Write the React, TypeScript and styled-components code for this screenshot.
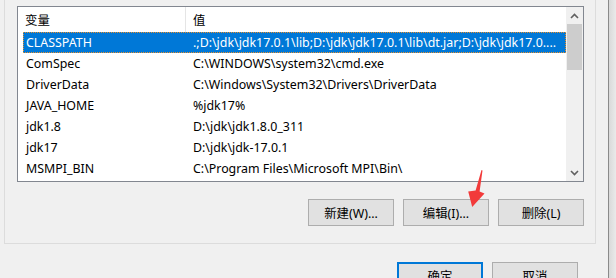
import React from 'react';
import styled, { createGlobalStyle } from 'styled-components';

const GlobalStyle = createGlobalStyle`
  html, body {
    margin: 0;
    padding: 0;
    background: #f0f0f0;
  }
  body {
    font-family: 'Noto Sans', 'Noto Sans CJK SC', sans-serif;
    font-size: 12.4px;
    color: #000;
  }
`;

interface EnvVar {
  name: string;
  value: string;
}

const vars: EnvVar[] = [
  {
    name: 'CLASSPATH',
    value: '.;D:\\jdk\\jdk17.0.1\\lib;D:\\jdk\\jdk17.0.1\\lib\\dt.jar;D:\\jdk\\jdk17.0....',
  },
  { name: 'ComSpec', value: 'C:\\WINDOWS\\system32\\cmd.exe' },
  { name: 'DriverData', value: 'C:\\Windows\\System32\\Drivers\\DriverData' },
  { name: 'JAVA_HOME', value: '%jdk17%' },
  { name: 'jdk1.8', value: 'D:\\jdk\\jdk1.8.0_311' },
  { name: 'jdk17', value: 'D:\\jdk\\jdk-17.0.1' },
  { name: 'MSMPI_BIN', value: 'C:\\Program Files\\Microsoft MPI\\Bin\\' },
];

const App = () => {
  return (
    <>
      <GlobalStyle />
      <Screen>
        <Window>
          <GroupPanel>
            <ListView>
              <ListBody>
                <Header>
                  <HeaderCell width={168}>变量</HeaderCell>
                  <HeaderCell>值</HeaderCell>
                </Header>
                {vars.map((v, i) => (
                  <Row key={v.name} selected={i === 0}>
                    <NameCell>{v.name}</NameCell>
                    <ValueCell>{v.value}</ValueCell>
                  </Row>
                ))}
              </ListBody>
              <ScrollBar>
                <ScrollArrow>
                  <svg width="9" height="6" viewBox="0 0 9 6">
                    <path d="M1 5 L4.5 1.5 L8 5" fill="none" stroke="#606060" strokeWidth="1.6" />
                  </svg>
                </ScrollArrow>
                <Track>
                  <Thumb />
                </Track>
                <ScrollArrow>
                  <svg width="9" height="6" viewBox="0 0 9 6">
                    <path d="M1 1 L4.5 4.5 L8 1" fill="none" stroke="#606060" strokeWidth="1.6" />
                  </svg>
                </ScrollArrow>
              </ScrollBar>
            </ListView>
            <ButtonRow>
              <Button>新建(W)...</Button>
              <Button>编辑(I)...</Button>
              <Button>删除(L)</Button>
            </ButtonRow>
          </GroupPanel>
          <DialogButtons>
            <Button primary>确定</Button>
            <Button>取消</Button>
          </DialogButtons>
        </Window>
        <Shadow />
        <Arrow width="20" height="40" viewBox="0 0 20 40">
          <polygon
            points="13.5,0 14.5,0.5 11.6,21.5 16.5,23.5 4.2,37 0.2,21.5 7.6,20.5"
            fill="#f23a3a"
          />
        </Arrow>
      </Screen>
    </>
  );
};

export default App;

const Screen = styled.div`
  position: relative;
  width: 616px;
  height: 278px;
  overflow: hidden;
  display: flex;
  background: #f0f0f0;
`;

const Window = styled.div`
  width: 608px;
  flex: none;
  border-right: 1px solid #8a8a8a;
  display: flex;
  flex-direction: column;
`;

const Shadow = styled.div`
  flex: 1;
  background: linear-gradient(to right, #d9d9d9, #eaeaea);
`;

const GroupPanel = styled.div`
  flex: none;
  margin-left: 4px;
  width: 592px;
  height: 244px;
  border: 1px solid #dcdcdc;
  border-top: none;
  padding: 6px 0 0 12px;
  box-sizing: border-box;
  display: flex;
  flex-direction: column;
`;

const ListView = styled.div`
  width: 567px;
  height: 176px;
  flex: none;
  border: 1px solid #828790;
  box-sizing: border-box;
  background: #fff;
  display: flex;
`;

const ListBody = styled.div`
  flex: 1;
  min-width: 0;
  overflow: hidden;
`;

const Header = styled.div`
  height: 25px;
  display: flex;
`;

const HeaderCell = styled.div<{ width?: number }>`
  width: ${({ width }) => (width ? `${width}px` : 'auto')};
  flex: ${({ width }) => (width ? 'none' : '1')};
  box-sizing: border-box;
  padding-left: 7px;
  display: flex;
  align-items: center;
  border-right: ${({ width }) => (width ? '1px solid #e5e5e5' : 'none')};
  white-space: nowrap;
`;

const Row = styled.div<{ selected?: boolean }>`
  height: 21px;
  margin-left: 5px;
  display: flex;
  align-items: center;
  box-sizing: border-box;
  white-space: nowrap;
  background: ${({ selected }) => (selected ? '#0078d7' : 'transparent')};
  color: ${({ selected }) => (selected ? '#fff' : '#000')};
  border: 1px dotted ${({ selected }) => (selected ? '#e8902c' : 'transparent')};
`;

const NameCell = styled.div`
  width: 163px;
  flex: none;
  padding-left: 2px;
  box-sizing: border-box;
`;

const ValueCell = styled.div`
  flex: 1;
  padding-left: 6px;
  overflow: hidden;
`;

const ScrollBar = styled.div`
  width: 17px;
  flex: none;
  background: #f0f0f0;
  display: flex;
  flex-direction: column;
`;

const ScrollArrow = styled.div`
  height: 17px;
  display: flex;
  align-items: center;
  justify-content: center;
`;

const Track = styled.div`
  flex: 1;
  padding: 0 1px;
`;

const Thumb = styled.div`
  height: 46px;
  background: #cdcdcd;
`;

const ButtonRow = styled.div`
  width: 567px;
  margin-top: 17px;
  display: flex;
  justify-content: flex-end;
  gap: 9px;
`;

const Button = styled.button<{ primary?: boolean }>`
  width: 86px;
  height: 27px;
  flex: none;
  box-sizing: border-box;
  margin: 0;
  padding: 0;
  background: #e1e1e1;
  border: ${({ primary }) => (primary ? '2px solid #0078d7' : '1px solid #adadad')};
  font-family: 'Noto Sans', 'Noto Sans CJK SC', sans-serif;
  font-size: 12.4px;
  color: #000;
`;

const DialogButtons = styled.div`
  flex: none;
  margin-top: 18px;
  margin-left: 397px;
  display: flex;
  gap: 9px;
`;

const Arrow = styled.svg`
  position: absolute;
  left: 468px;
  top: 170px;
`;
